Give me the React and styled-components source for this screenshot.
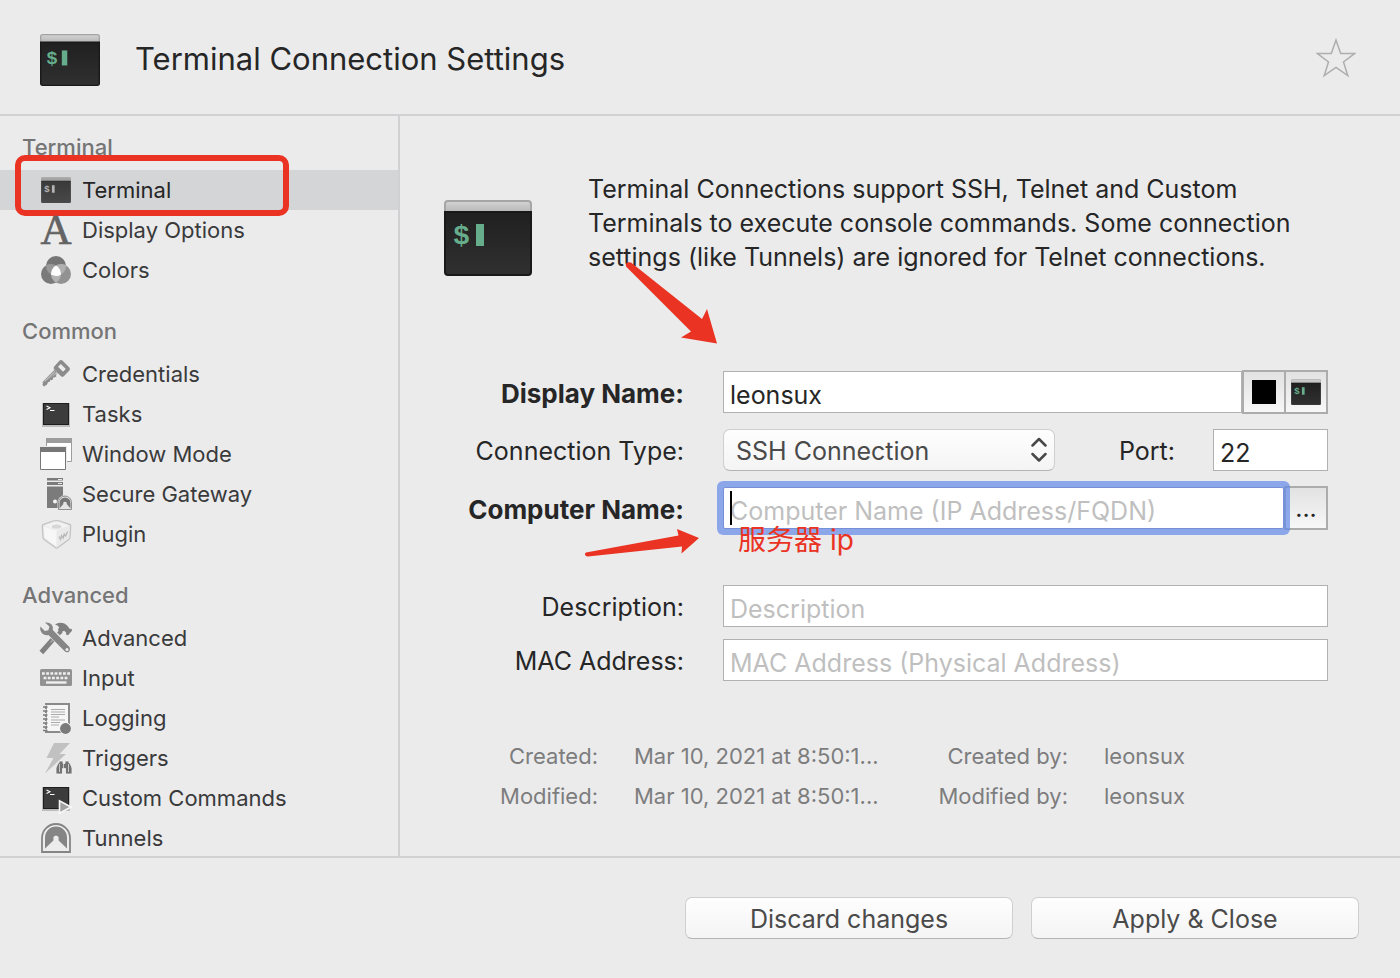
import React from 'react';
import styled, { createGlobalStyle, css } from 'styled-components';

const GlobalStyle = createGlobalStyle`
  *, *::before, *::after { box-sizing: border-box; }
  body {
    margin: 0;
    background: #ebebec;
    color: #262626;
    font-family: Inter, "Noto Sans CJK SC", sans-serif;
  }
  button, input, select { font: inherit; color: inherit; margin: 0; }
`;

const line = '#d1d1d3';
const red = '#ea3323';

const Window = styled.div`
  height: 100vh;
  display: grid;
  grid-template-rows: auto minmax(0, 1fr) auto;
`;

const Header = styled.header`
  display: flex;
  align-items: center;
  gap: 35px;
  padding: 34px 44px 28px 40px;
  border-bottom: 2px solid ${line};
`;

const Title = styled.h1`
  flex: 1;
  margin: 0;
  padding-bottom: 2px;
  font-size: 31px;
  line-height: 50px;
  font-weight: 400;
`;

const StarButton = styled.button`
  display: flex;
  padding: 0 0 2px;
  border: 0;
  background: none;
`;

const Body = styled.div`
  display: grid;
  grid-template-columns: 400px minmax(0, 1fr);
`;

const Sidebar = styled.nav`
  display: flex;
  flex-direction: column;
  gap: 18px;
  min-height: 0;
  padding-top: 8px;
  border-right: 2px solid ${line};
  overflow: hidden;
`;

const GroupTitle = styled.h2`
  margin: 0;
  padding-left: 22px;
  font-size: 22px;
  line-height: 46px;
  font-weight: 500;
  color: #757576;
`;

const List = styled.ul`
  margin: 0;
  padding: 0;
  list-style: none;
`;

const Item = styled.li`
  position: relative;
`;

const ItemLink = styled.a`
  display: flex;
  align-items: center;
  gap: 10px;
  height: 40px;
  padding-left: 40px;
  font-size: 22px;
  color: #3a3a3b;
  text-decoration: none;
  ${p => p.$active && css`
    background: #d4d5d7;
    color: #262626;
  `}
`;

const Highlight = styled.span`
  position: absolute;
  left: 15px;
  top: -15px;
  width: 274px;
  height: 61px;
  border: 6px solid ${red};
  border-radius: 10px;
  pointer-events: none;
`;

const Main = styled.main`
  position: relative;
  padding: 56px 72px 0 44px;
`;

const Intro = styled.section`
  display: flex;
  align-items: flex-start;
  gap: 56px;
  padding-bottom: 94px;

  svg { flex: none; margin-top: 28px; }
`;

const IntroText = styled.p`
  margin: 0;
  font-size: 25px;
  line-height: 34px;
`;

const Form = styled.form`
  display: flex;
  flex-direction: column;
  gap: 14px;
`;

const SubFields = styled.div`
  display: flex;
  flex-direction: column;
  gap: 10px;
  padding-top: 40px;
`;

const Row = styled.div`
  display: grid;
  grid-template-columns: 240px minmax(0, 1fr);
  column-gap: 39px;
  align-items: center;
  height: 44px;
`;

const Label = styled.label`
  padding-top: 2px;
  text-align: right;
  white-space: nowrap;
  font-size: ${p => (p.$strong ? 26 : 25)}px;
  font-weight: ${p => (p.$strong ? 700 : 400)};
`;

const Controls = styled.div`
  position: relative;
  display: flex;
  align-items: center;
`;

const Field = styled.input`
  flex: ${p => (p.$width ? 'none' : 1)};
  width: ${p => p.$width || 'auto'};
  min-width: 0;
  height: 42px;
  padding: 5px 6px 0;
  border: 1px solid #b1b1b1;
  border-radius: 0;
  outline: none;
  background: #fff;
  font-size: 25px;

  &::placeholder { color: #bfbfbf; opacity: 1; }

  ${p => p.$focused && css`
    position: relative;
    z-index: 1;
    border-color: #7590d9;
    border-radius: 2px;
    box-shadow: 0 0 0 6px rgba(98, 138, 232, 0.7);
  `}
`;

const Caret = styled.span`
  position: absolute;
  z-index: 2;
  left: 7px;
  top: 5px;
  width: 2px;
  height: 34px;
  background: #000;
`;

const SquareButton = styled.button`
  display: flex;
  align-items: center;
  justify-content: center;
  width: 44px;
  height: 44px;
  padding: 0;
  border: 2px solid #acacac;
  background: linear-gradient(#e2e2e2, #f7f7f7);
  font-size: 25px;

  & + & { border-left: 0; width: 42px; }
`;

const Swatch = styled.span`
  width: 24px;
  height: 24px;
  background: #000;
`;

const SelectBox = styled.div`
  position: relative;
  width: 332px;

  svg {
    position: absolute;
    right: 8px;
    top: 7px;
    pointer-events: none;
  }
`;

const raised = css`
  border: 1px solid #cfcfcf;
  border-bottom-color: #b4b4b4;
  border-radius: 7px;
  background: linear-gradient(#fefefe, #f4f4f4);
`;

const Select = styled.select`
  ${raised}
  appearance: none;
  display: block;
  width: 100%;
  height: 42px;
  padding: 2px 40px 0 12px;
  font-size: 25px;
  color: #4a4a4a;
`;

const PortLabel = styled(Label)`
  flex: 1;
  padding-right: 38px;
`;

const Note = styled.span`
  position: absolute;
  z-index: 3;
  left: 15px;
  top: 34px;
  font-size: 28px;
  line-height: 40px;
  color: ${red};
  white-space: nowrap;
`;

const ArrowDown = styled.svg`
  position: absolute;
  left: 224px;
  top: 144px;
`;

const ArrowRight = styled.svg`
  position: absolute;
  left: 184px;
  top: 412px;
`;

const Meta = styled.dl`
  display: grid;
  grid-template-columns: 154px 250px 148px minmax(0, 1fr);
  column-gap: 36px;
  margin: 54px 0 0;
  font-size: 22px;
  line-height: 40px;
  color: #7d7d7e;
  white-space: nowrap;

  dt { text-align: right; }
  dd { margin: 0; }
`;

const Footer = styled.footer`
  display: flex;
  justify-content: flex-end;
  gap: 18px;
  padding: 39px 41px;
  border-top: 2px solid ${line};
`;

const PushButton = styled.button`
  ${raised}
  width: 328px;
  height: 42px;
  padding: 2px 0 0;
  font-size: 25px;
  color: #4a4a4a;
`;

function TerminalIcon({ width, height, muted }) {
  const tint = muted ? '#b4b4b4' : '#66ad8b';
  const id = muted ? 'm' : 'c';
  return (
    <svg width={width} height={height} viewBox="0 0 88 76" preserveAspectRatio="none" aria-hidden="true">
      <defs>
        <linearGradient id={`bar-${id}`} x1="0" y1="0" x2="0" y2="1">
          <stop offset="0" stopColor={muted ? '#a8a8a8' : '#d4d4d4'} />
          <stop offset="1" stopColor={muted ? '#a0a0a0' : '#b2b2b2'} />
        </linearGradient>
        <linearGradient id={`scr-${id}`} x1="0" y1="0" x2="0" y2="1">
          <stop offset="0" stopColor={muted ? '#3a3a3a' : '#202020'} />
          <stop offset="1" stopColor={muted ? '#484848' : '#303030'} />
        </linearGradient>
      </defs>
      <path d="M1 14V4q0-3 3-3h80q3 0 3 3v10z" fill={`url(#bar-${id})`} stroke="#a5a5a5" strokeWidth="2" />
      <path d="M1 12h86v60q0 3-3 3H4q-3 0-3-3z" fill={`url(#scr-${id})`} stroke={muted ? '#333' : '#191919'} strokeWidth="2" />
      <text x="9" y="44" fontFamily="Liberation Mono, monospace" fontWeight="700" fontSize="28" fill={tint}>$</text>
      <rect x="32" y="24" width="8" height="22" fill={tint} />
    </svg>
  );
}

const Glyph = ({ children }) => (
  <svg width="32" height="32" viewBox="0 0 32 32" overflow="visible" aria-hidden="true">{children}</svg>
);

const icons = {
  terminal: (
    <Glyph>
      <svg x="1" y="3" width="30" height="26"><TerminalIcon width={30} height={26} muted /></svg>
    </Glyph>
  ),
  letter: (
    <Glyph>
      <text x="16" y="30" textAnchor="middle" fontFamily="Liberation Serif, serif" fontSize="43" fill="#636363" stroke="#636363" strokeWidth=".7">A</text>
    </Glyph>
  ),
  colors: (
    <Glyph>
      <defs>
        <clipPath id="top"><circle cx="16" cy="12" r="10" /></clipPath>
        <clipPath id="left"><circle cx="11" cy="20" r="10" /></clipPath>
      </defs>
      <circle cx="16" cy="12" r="10" fill="#757575" />
      <circle cx="11" cy="20" r="10" fill="#7a7a7a" />
      <circle cx="21" cy="20" r="10" fill="#929292" />
      <g clipPath="url(#top)">
        <circle cx="11" cy="20" r="10" fill="#999" />
        <circle cx="21" cy="20" r="10" fill="#b0b0b0" />
      </g>
      <g clipPath="url(#left)">
        <circle cx="21" cy="20" r="10" fill="#b4b4b4" />
        <g clipPath="url(#top)"><circle cx="21" cy="20" r="10" fill="#fff" /></g>
      </g>
    </Glyph>
  ),
  key: (
    <Glyph>
      <path fillRule="evenodd" fill="#8b8b8b" d="M19.6 2.6q1.4-1.2 2.8 0l7 7q1.2 1.4 0 2.8l-5.6 5.8q-1.4 1.2-2.8 0l-6.800-6.800q-1.200-1.400 0-2.800zM20.800 6l-2.800 2.800 5 5 2.800-2.800z" />
      <path d="M15.400 13.200 4.200 24.600" stroke="#9a9a9a" strokeWidth="3.400" strokeLinecap="round" />
      <path d="M18.400 14.200 16 17l.4 1.200-1.800 1.200-1.400-.2-.2 2-1.600 1-1-.6-.4 2-2 .6-1 2.400-3 2-1.600-1.600 1-2z" fill="#8b8b8b" />
      <path d="M14.600 13.800 5 23.200" stroke="#c8c8c8" strokeWidth="1" />
    </Glyph>
  ),
  console: (
    <Glyph>
      <rect x="2" y="5" width="28" height="24" fill="#bcbcbc" />
      <rect x="3.500" y="5.500" width="25" height="21" fill="#3c3c3c" stroke="#1e1e1e" />
      <path d="m6.500 8 3.500 1.800L6.500 11.500M10 12.500h4.500" fill="none" stroke="#fff" strokeWidth="1.100" />
    </Glyph>
  ),
  windows: (
    <Glyph>
      <path d="M6.500.5h25v23h-25z" fill="#fff" stroke="#9c9c9c" />
      <path d="M6 0h26v5H6z" fill="#9c9c9c" />
      <path d="M0 8h27v24H0z" fill="#ebebec" />
      <path d="M.5 9.500h25v22H.5z" fill="#fff" stroke="#777" />
      <path d="M0 9h26v5H0z" fill="#777" />
    </Glyph>
  ),
  gateway: (
    <Glyph>
      <path d="M7 0h16v2.600H7zM7 4h16v3H7zM7 8.400h16V30H7z" fill="#7b7b7b" />
      <path d="M18 1.500h4M18 5.500h4" stroke="#e6e6e6" strokeWidth="1" />
      <circle cx="15" cy="23.600" r="2" fill="#f4f4f4" />
      <path d="M17.500 32v-7.500a7.200 7.200 0 0 1 14.500 0V32z" fill="#dedede" />
      <path d="M18.500 31.500V24.600a6.300 6.300 0 0 1 13 0v6.900z" fill="#e4e4e4" stroke="#909090" />
      <path d="M19.500 30.500v-5.500a5.400 5.400 0 0 1 11 0v5.500l-3.800-4.500v-1.500q-1.700-1.600-3.400 0V26z" fill="#777" />
    </Glyph>
  ),
  plugin: (
    <Glyph>
      <path d="M16.500 2.500 20 3l10 3.600q.8.400.7 1.200L30 19.600q-.2 1.200-1.200 1.800L17.600 29.800q-1 .6-2 0L4.200 21.400q-1-.6-1.200-1.800L2.300 7.800q0-.8.7-1.200L13 3z" fill="#e9e9e9" stroke="#c2c2c2" strokeWidth="1.200" />
      <path d="M16.500 3.500 29 7.500l-12.500 5-12.500-5z" fill="#f2f2f2" />
      <path d="M4 8.500 16.500 13v15.500L4.500 19.800z" fill="#f7f7f7" />
      <path d="M12 7.500q4.500-2 9 0v2.400q-4.500 1.600-9 0z" fill="#d7d7d7" />
      <path d="m19 18.500 1.600 3 1-4 1.600 2.500 1-4 1.400 2 2-4.500" fill="none" stroke="#b5b5b5" strokeWidth="1.200" />
    </Glyph>
  ),
  tools: (
    <Glyph>
      <path d="M10.800 19.800 3 28.600" stroke="#818181" strokeWidth="5" strokeLinecap="square" strokeLinejoin="round" />
      <path d="M18.500 11.800 21.200 9" stroke="#818181" strokeWidth="4" />
      <path d="m13 18-2.500 2.500" stroke="#a8a8a8" strokeWidth="1.500" />
      <path d="M15 2.600Q18 .2 22.500 1q4 .8 6.500 5l1 1 1.600-.2.400 2-4 4.400-2-.6.200-1.800-2-2-3.600 1.800-2.800-2.800 1.400-2.400Q18 3 15 2.600z" fill="#7f7f7f" />
      <path d="M5 .6q4-.8 6.800 2.200 1.800 2.400 1 5.200L29.400 25q1.600 2.400-.2 4.400-2 1.800-4.200.2L8.400 13Q5 13.800 2.200 11.400-.4 8.600.4 4.600L4.800 9l3.600-.8 1-3.600z" fill="#868686" />
      <circle cx="27" cy="27.400" r="1.500" fill="#f0f0f0" />
    </Glyph>
  ),
  keyboard: (
    <Glyph>
      <rect x="0" y="7" width="32" height="17" rx="1.500" fill="#929292" />
      <path d="M2 11.500h28" stroke="#efefef" strokeWidth="2.600" strokeDasharray="2.800 1.400" />
      <path d="M3.600 16h25" stroke="#efefef" strokeWidth="2.600" strokeDasharray="2.800 1.400" />
      <path d="M6 20.500h20.500" stroke="#efefef" strokeWidth="2.400" />
    </Glyph>
  ),
  log: (
    <Glyph>
      <path d="M6 2h23v28H6z" fill="#f6f6f6" stroke="#8a8a8a" strokeWidth="2" />
      <path d="M5 3v27" stroke="#ebebec" strokeWidth="3" strokeDasharray="1.500 2.500" />
      <path d="M3 5h4.500M3 9h4.500M3 13h4.500M3 17h4.500M3 21h4.500M3 25h4.500M3 28.500h4.500" stroke="#7c7c7c" strokeWidth="1.600" />
      <path d="M11 7.500h14M11 10h14M11 12.500h14M11 15h8M11 18h14M11 20.500h9M11 23h8" stroke="#ababab" strokeWidth="1.100" />
      <circle cx="25.500" cy="26.500" r="6.300" fill="#f0f0f0" />
      <circle cx="25.500" cy="26.500" r="5.400" fill="#7a7a7a" />
    </Glyph>
  ),
  trigger: (
    <Glyph>
      <path d="M14 1h16L19.500 12H26L5 31.500 13.500 16H6.500z" fill="#c1c1c1" />
      <path d="M16 32v-6l2-5h1v-2h4v2.500h2V19h4v2h1l2 5v6h-6.500v-5.500h-3V32z" fill="#737373" stroke="#f1f1f1" strokeWidth=".8" />
      <path d="M19.500 22v8M28.500 22v8M23.500 22v4" stroke="#dadada" strokeWidth=".8" />
    </Glyph>
  ),
  command: (
    <Glyph>
      <rect x="2" y="5" width="28" height="24" fill="#bcbcbc" />
      <rect x="3.500" y="5.500" width="25" height="21" fill="#3c3c3c" stroke="#1e1e1e" />
      <path d="m6.500 8 3.500 1.800L6.500 11.500M10 12.500h4.500" fill="none" stroke="#fff" strokeWidth="1.100" />
      <path d="M19.500 18.800v12.400L31 25z" fill="#a0a0a0" stroke="#f8f8f8" strokeWidth="1.600" />
    </Glyph>
  ),
  tunnel: (
    <Glyph>
      <path d="M2 30V16a14 14 0 0 1 28 0v14z" fill="#ececec" stroke="#858585" strokeWidth="1.800" />
      <path d="M5 26.500V15.500a11 11 0 0 1 22 0v11L18.600 18.500V15q-2.600-3-5.200 0v3.500z" fill="#858585" />
    </Glyph>
  ),
};

const groups = [
  ['Terminal', [['Terminal', 'terminal'], ['Display Options', 'letter'], ['Colors', 'colors']]],
  ['Common', [
    ['Credentials', 'key'], ['Tasks', 'console'], ['Window Mode', 'windows'],
    ['Secure Gateway', 'gateway'], ['Plugin', 'plugin'],
  ]],
  ['Advanced', [
    ['Advanced', 'tools'], ['Input', 'keyboard'], ['Logging', 'log'],
    ['Triggers', 'trigger'], ['Custom Commands', 'command'], ['Tunnels', 'tunnel'],
  ]],
];

export default function App() {
  return (
    <Window>
      <GlobalStyle />
      <Header>
        <TerminalIcon width={60} height={52} />
        <Title>Terminal Connection Settings</Title>
        <StarButton type="button" aria-label="Favorite">
          <svg width="40" height="42" viewBox="0 0 40 42" fill="none" stroke="#aeaeae" strokeWidth="1.500">
            <path d="M20 2l4.700 13.600H38.500L27.500 24l4.300 13.700L20 29.500 8.200 37.700 12.500 24 1.500 15.600h13.800z" />
          </svg>
        </StarButton>
      </Header>

      <Body>
        <Sidebar>
          {groups.map(([title, entries]) => (
            <section key={title}>
              <GroupTitle>{title}</GroupTitle>
              <List>
                {entries.map(([name, icon]) => {
                  const active = icon === 'terminal';
                  return (
                    <Item key={name}>
                      <ItemLink href="#" $active={active}>{icons[icon]}{name}</ItemLink>
                      {active && <Highlight />}
                    </Item>
                  );
                })}
              </List>
            </section>
          ))}
        </Sidebar>

        <Main>
          <Intro>
            <TerminalIcon width={88} height={76} />
            <IntroText>
              Terminal Connections support SSH, Telnet and Custom Terminals to execute console
              commands. Some connection settings (like Tunnels) are ignored for Telnet connections.
            </IntroText>
          </Intro>

          <Form>
            <Row>
              <Label htmlFor="display" $strong>Display Name:</Label>
              <Controls>
                <Field id="display" defaultValue="leonsux" />
                <SquareButton type="button" aria-label="Color"><Swatch /></SquareButton>
                <SquareButton type="button" aria-label="Icon"><TerminalIcon width={30} height={26} /></SquareButton>
              </Controls>
            </Row>
            <Row>
              <Label htmlFor="type">Connection Type:</Label>
              <Controls>
                <SelectBox>
                  <Select id="type"><option>SSH Connection</option></Select>
                  <svg width="16" height="28" viewBox="0 0 16 28" fill="none" stroke="#484848" strokeWidth="2.500" strokeLinecap="round" strokeLinejoin="round">
                    <path d="M1.500 9.500 8 3l6.500 6.500M1.500 18 8 24.500 14.500 18" />
                  </svg>
                </SelectBox>
                <PortLabel htmlFor="port">Port:</PortLabel>
                <Field id="port" $width="115px" defaultValue="22" />
              </Controls>
            </Row>
            <Row>
              <Label htmlFor="computer" $strong>Computer Name:</Label>
              <Controls>
                <Field id="computer" $focused placeholder="Computer Name (IP Address/FQDN)" />
                <Caret />
                <SquareButton type="button" aria-label="Browse">...</SquareButton>
                <Note>服务器 ip</Note>
              </Controls>
            </Row>
            <SubFields>
              <Row>
                <Label htmlFor="description">Description:</Label>
                <Controls><Field id="description" placeholder="Description" /></Controls>
              </Row>
              <Row>
                <Label htmlFor="mac">MAC Address:</Label>
                <Controls><Field id="mac" placeholder="MAC Address (Physical Address)" /></Controls>
              </Row>
            </SubFields>
          </Form>

          <Meta>
            <dt>Created:</dt><dd>Mar 10, 2021 at 8:50:1...</dd>
            <dt>Created by:</dt><dd>leonsux</dd>
            <dt>Modified:</dt><dd>Mar 10, 2021 at 8:50:1...</dd>
            <dt>Modified by:</dt><dd>leonsux</dd>
          </Meta>

          <ArrowDown width="96" height="88" viewBox="0 0 96 88" aria-hidden="true">
            <path d="M7 2.500 78 59l5-10 10 34.500-36-6 10-6L2 6.500Q1 1 7 2.500z" fill={red} />
          </ArrowDown>
          <ArrowRight width="118" height="34" viewBox="0 0 118 34" aria-hidden="true">
            <path d="M2 24.500 94.500 7.500 93 1l22 9-17.500 15.500.5-7L4 28.500Q.5 28 1 25.500z" fill={red} />
          </ArrowRight>
        </Main>
      </Body>

      <Footer>
        <PushButton type="button">Discard changes</PushButton>
        <PushButton type="button">Apply &amp; Close</PushButton>
      </Footer>
    </Window>
  );
}
